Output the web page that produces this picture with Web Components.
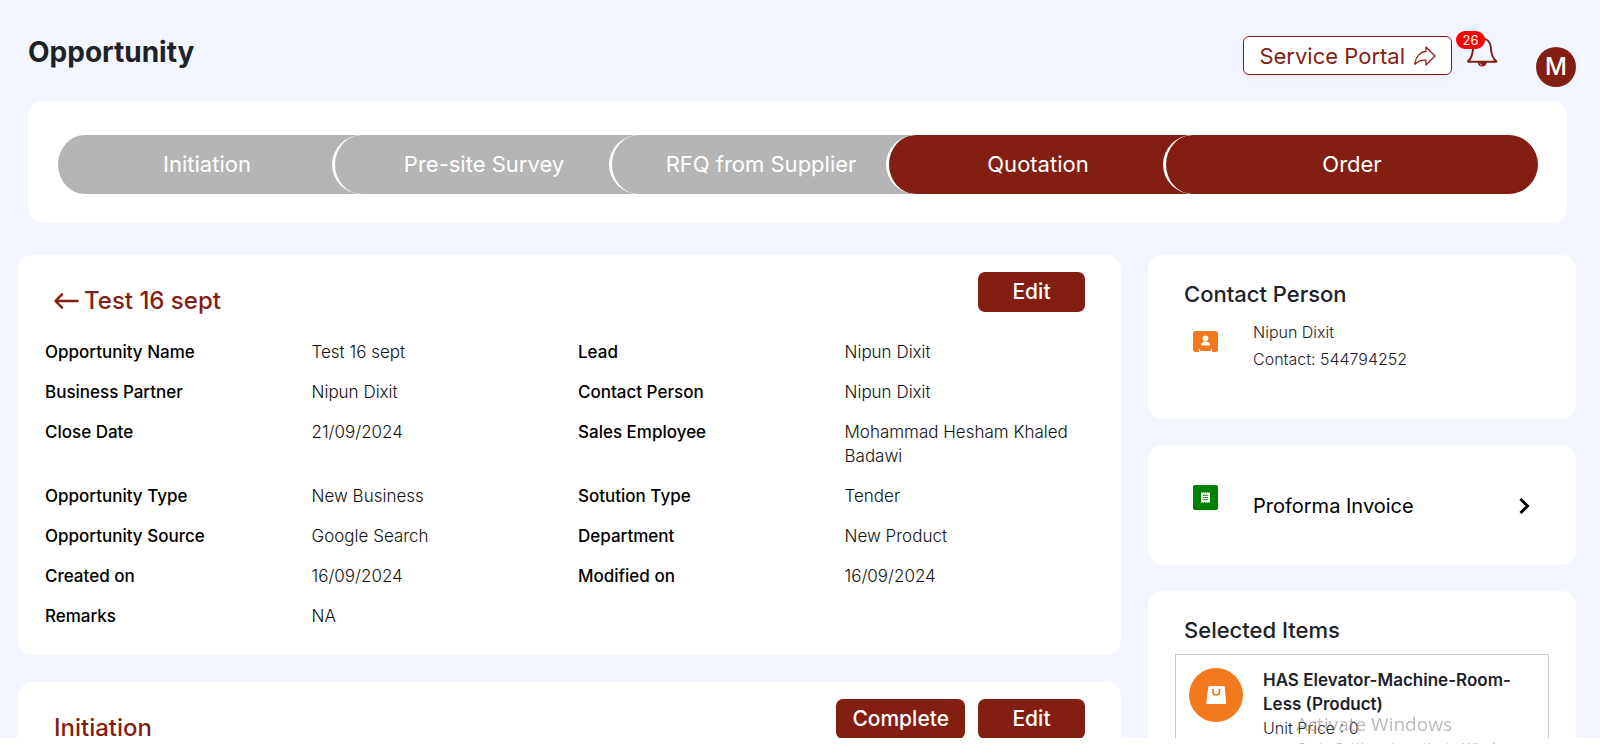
<!DOCTYPE html>
<html lang="en">
<head>
<meta charset="utf-8">
<meta name="viewport" content="width=device-width, initial-scale=1">
<title>Opportunity</title>
<style>
  html, body { margin: 0; background: #fff; }
  body {
    --brand: #831f12;
    --brand-line: #831f12;
    --muted: #b5b5b5;
    --orange: #f2791e;
    --page: #f3f6fe;
    font-family: Inter, "Liberation Sans", sans-serif;
    font-size: 16px;
    line-height: 24px;
    color: #1d2228;
  }
</style>
</head>
<body>
<opportunity-page></opportunity-page>

<script>
const define = (name, html, setup) => {
  const template = document.createElement('template');
  template.innerHTML = html;
  customElements.define(name, class extends HTMLElement {
    connectedCallback() {
      if (this.shadowRoot) return;
      this.attachShadow({ mode: 'open' }).append(template.content.cloneNode(true));
      if (setup) setup.call(this, this.shadowRoot);
    }
  });
};

define('brand-button', `
  <style>
    :host { display: block; }
    button {
      height: 40px; min-width: 107px; padding: 0 16px; border: 0; border-radius: 7px;
      background: var(--brand); color: #fff; cursor: pointer;
      font: 500 21px/40px Inter, sans-serif;
    }
  </style>
  <button type="button"><slot></slot></button>`);

define('panel-card', `
  <style>
    :host { display: block; background: #fff; border-radius: 15px; }
  </style>
  <slot></slot>`);

define('top-bar', `
  <style>
    :host { display: flex; align-items: flex-start; padding: 32px 24px 0 28px; height: 69px; box-sizing: border-box; }
    h1 { flex: 1; margin: 0; font-size: 28px; line-height: 40px; font-weight: 700; }
    .portal {
      display: flex; align-items: center; gap: 9px; box-sizing: border-box;
      height: 39px; margin-top: 4px; padding: 0 15px;
      border: 1px solid var(--brand-line); border-radius: 6px; background: #fff; color: var(--brand);
      box-shadow: 0 2px 8px #0000000a;
      font: 400 22px/32px Inter, sans-serif; cursor: pointer;
    }
    .bell {
      position: relative; width: 34px; height: 34px; margin: 3px 37px 0 13px; padding: 0;
      border: 0; background: none; cursor: pointer; color: var(--brand);
    }
    .bell svg { display: block; }
    .count {
      position: absolute; left: -9px; top: -4px; width: 29px; height: 18px; border-radius: 9px;
      background: #f00; color: #fff; font: 400 13px/18px Inter, sans-serif; text-align: center;
    }
    .avatar {
      width: 40px; height: 40px; margin-top: 15px; padding: 0; border: 0; border-radius: 50%;
      background: var(--brand); color: #fff; font: 500 24px/40px Inter, sans-serif; cursor: pointer;
    }
  </style>
  <h1>Opportunity</h1>
  <button class="portal" type="button">Service Portal
    <svg width="22" height="20" viewBox="0 0 22 20" fill="none" stroke="currentColor" stroke-width="1.2" stroke-linejoin="round" aria-hidden="true">
      <path d="M12 1l9 9-9 9v-4.800C7 14 3.600 15.200 1.200 18.200 .6 18.400 .6 18 .7 17.600 2 10.500 6.500 5.700 12 5.300z"/>
    </svg>
  </button>
  <button class="bell" type="button" aria-label="Notifications">
    <svg width="34" height="34" viewBox="0 0 34 34" fill="none" aria-hidden="true">
      <path d="M17 3.500c-5 0-8.400 3.600-8.800 8.700-.4 6.600-1.400 11.300-5 13.800v.8h28v-.8c-3.800-2.500-5-7.200-5.400-13.800C25.400 7.100 22 3.500 17 3.500z" stroke="currentColor" stroke-width="2" stroke-linejoin="round"/>
      <path d="M12.600 27h9.200c-.4 3-2.200 4.500-4.600 4.500s-4.200-1.500-4.600-4.500z" fill="currentColor"/>
      <path d="M14.800 28.200c.3 1.200 1 1.900 2.200 2" stroke="#fff" stroke-width=".7"/>
    </svg>
    <span class="count">26</span>
  </button>
  <button class="avatar" type="button" aria-label="Account M">M</button>`);

define('stage-track', `
  <style>
    :host { display: block; }
    ol { display: flex; list-style: none; margin: 0; padding: 0; }
  </style>
  <ol><slot></slot></ol>`);

define('stage-step', `
  <style>
    :host { display: block; flex: 277 1 0; min-width: 0; }
    :host([last]) { flex-grow: 375; }
    div {
      box-sizing: border-box; height: 59px; margin-right: -24px; position: relative;
      border-left: 3px solid #fff; border-radius: 30px 0 0 30px; background: var(--muted);
      color: #fff; font-size: 22px; line-height: 59px; text-align: center; white-space: nowrap;
    }
    :host([done]) div { background: var(--brand); }
    :host([last]) div { margin-right: 0; border-radius: 30px; }
  </style>
  <div role="listitem"><slot></slot></div>`);

define('detail-list', `
  <style>
    :host { display: block; }
    dl {
      display: grid; grid-template-columns: repeat(4, minmax(0, 1fr)); row-gap: 16px; margin: 0;
      font-size: 17px; line-height: 24px;
    }
    dt { font-weight: 500; color: #000; }
    dd { margin: 0; font-weight: 300; color: #111; }
  </style>
  <dl></dl>`, function (root) {
  const rows = [
    ['Opportunity Name', 'Test 16 sept'], ['Lead', 'Nipun Dixit'],
    ['Business Partner', 'Nipun Dixit'], ['Contact Person', 'Nipun Dixit'],
    ['Close Date', '21/09/2024'], ['Sales Employee', 'Mohammad Hesham Khaled Badawi'],
    ['Opportunity Type', 'New Business'], ['Sotution Type', 'Tender'],
    ['Opportunity Source', 'Google Search'], ['Department', 'New Product'],
    ['Created on', '16/09/2024'], ['Modified on', '16/09/2024'],
    ['Remarks', 'NA']
  ];
  root.querySelector('dl').innerHTML = rows.map(([k, v]) => `<dt>${k}</dt><dd>${v}</dd>`).join('');
});

define('section-head', `
  <style>
    :host { display: flex; align-items: flex-start; padding: 17px 36px 0 36px; }
    h2 {
      flex: 1; display: flex; align-items: center; gap: 5px; margin: 11px 0 0;
      font-size: 24px; line-height: 36px; font-weight: 500; color: var(--brand);
    }
    .actions { display: flex; gap: 13px; }
  </style>
  <h2><slot name="back"></slot><slot></slot></h2>
  <div class="actions"><slot name="actions"></slot></div>`);

define('back-link', `
  <style>
    :host { display: block; line-height: 0; }
    a { display: block; color: var(--brand); }
    svg { display: block; }
  </style>
  <a href="#" aria-label="Back">
    <svg width="25" height="18" viewBox="0 0 25 18" fill="none" stroke="currentColor" stroke-width="2.400" stroke-linecap="round" stroke-linejoin="round" aria-hidden="true">
      <path d="M23.500 9H2M8 2.300L1.500 9 8 15.700"/>
    </svg>
  </a>`);

define('contact-card', `
  <style>
    :host { display: block; padding: 26px 36px 46px; }
    h2 { margin: 0 0 12px; font-size: 22px; line-height: 26px; font-weight: 500; }
    .row { display: flex; align-items: flex-start; }
    svg { flex: none; margin: 12px 35px 0 9px; }
    p { margin: 0; font-size: 16px; line-height: 27px; font-weight: 300; }
  </style>
  <h2>Contact Person</h2>
  <div class="row">
    <svg width="25" height="22" viewBox="0 0 25 22" aria-hidden="true">
      <rect width="25" height="21" rx="3" fill="#f2791e"/>
      <circle cx="12.500" cy="7.200" r="2.800" fill="#fff"/>
      <path d="M8 14.600c0-2.600 1.800-4 4.500-4s4.500 1.400 4.500 4z" fill="#fff"/>
      <path d="M6.500 18v3M18.500 18v3M7 20.700h11" stroke="#fff" stroke-width="1.300"/>
    </svg>
    <div><p>Nipun Dixit</p><p>Contact: 544794252</p></div>
  </div>`);

define('invoice-card', `
  <style>
    :host { display: block; }
    a { display: flex; align-items: center; padding: 40px 45px 38px; color: #000; text-decoration: none; }
    .doc { flex: none; align-self: flex-start; margin-right: 35px; }
    span { flex: 1; font-size: 20px; line-height: 42px; }
  </style>
  <a href="#">
    <svg class="doc" width="25" height="25" viewBox="0 0 25 25" aria-hidden="true">
      <rect width="25" height="25" rx="2" fill="#008000"/>
      <path d="M8 7l1.100.9 1.100-.9 1.100.9 1.200-.9 1.200.9 1.100-.9 1.100.9L17 7v11l-1.100-.9-1.100.9-1.100-.9-1.200.9-1.200-.9-1.100.9-1.100-.9L8 18z" fill="#fff"/>
      <path d="M9.800 10.300h5.400M9.800 12.500h5.400M9.800 14.700h5.400" stroke="#008000" stroke-width=".9"/>
    </svg>
    <span>Proforma Invoice</span>
    <svg width="13" height="18" viewBox="0 0 13 18" fill="none" stroke="currentColor" stroke-width="3" aria-hidden="true">
      <path d="M2.500 2l7 7-7 7"/>
    </svg>
  </a>`);

define('items-card', `
  <style>
    :host { display: block; padding: 26px 27px; }
    h2 { margin: 0 0 11px 9px; font-size: 22px; line-height: 26px; font-weight: 500; }
    article {
      display: flex; align-items: flex-start; gap: 20px; padding: 13px;
      border: 1px solid #ccc; font-size: 16px; line-height: 24px; font-weight: 300;
    }
    svg { flex: none; }
    h3 { margin: 0; font-size: 17px; line-height: 24px; font-weight: 600; }
    p { margin: 0; }
  </style>
  <h2>Selected Items</h2>
  <article>
    <svg width="54" height="54" viewBox="0 0 54 54" aria-hidden="true">
      <circle cx="27" cy="27" r="27" fill="#f2791e"/>
      <path d="M20.500 18h14q1 0 1.200 1l1.500 16q.1 1-1 1H18.300q-1.200 0-1-1l2-16q.2-1 1.200-1z" fill="#fff"/>
      <path d="M24 21.500v2.300a3.200 3.200 0 0 0 6.400 0v-2.300" fill="none" stroke="#f2791e" stroke-width="1.700" stroke-linecap="round"/>
    </svg>
    <div>
      <h3>HAS Elevator-Machine-Room-Less (Product)</h3>
      <p>Unit Price : 0</p>
    </div>
  </article>`);

define('activation-notice', `
  <style>
    :host {
      display: block; position: fixed; right: 0; bottom: 0; width: 304px; height: 34px; overflow: hidden;
      pointer-events: none; color: #8d8d8d99; font-family: "Open Sans", sans-serif; white-space: nowrap;
    }
    p { margin: 0; font-size: 14px; line-height: 20px; }
    .title { font-size: 19px; line-height: 28px; }
  </style>
  <p class="title">Activate Windows</p>
  <p>Go to Settings to activate Windows.</p>`);

define('opportunity-page', `
  <style>
    :host { display: block; }
    main { height: calc(100vh - 6px); overflow: hidden; background: var(--page); }
    .stages { margin: 32px 33px 0 28px; padding: 34px 29px 29px 27px; }
    .columns {
      display: grid; grid-template-columns: minmax(0, 1103fr) minmax(0, 428fr); gap: 27px;
      align-items: start; margin: 32px 24px 0 18px;
    }
    .stack { display: flex; flex-direction: column; gap: 27px; }
    .stack.side { gap: 26px; }
    detail-list { padding: 21px 10px 27px 27px; }
    .next { min-height: 200px; }
  </style>
  <main>
    <top-bar></top-bar>
    <panel-card class="stages">
      <stage-track>
        <stage-step>Initiation</stage-step>
        <stage-step>Pre-site Survey</stage-step>
        <stage-step>RFQ from Supplier</stage-step>
        <stage-step done>Quotation</stage-step>
        <stage-step done last>Order</stage-step>
      </stage-track>
    </panel-card>
    <div class="columns">
      <div class="stack">
        <panel-card>
          <section-head>
            <back-link slot="back"></back-link>Test 16 sept
            <brand-button slot="actions">Edit</brand-button>
          </section-head>
          <detail-list></detail-list>
        </panel-card>
        <panel-card class="next">
          <section-head>Initiation
            <brand-button slot="actions">Complete</brand-button>
            <brand-button slot="actions">Edit</brand-button>
          </section-head>
        </panel-card>
      </div>
      <div class="stack side">
        <panel-card><contact-card></contact-card></panel-card>
        <panel-card><invoice-card></invoice-card></panel-card>
        <panel-card><items-card></items-card></panel-card>
      </div>
    </div>
  </main>
  <activation-notice></activation-notice>`);
</script>
</body>
</html>
